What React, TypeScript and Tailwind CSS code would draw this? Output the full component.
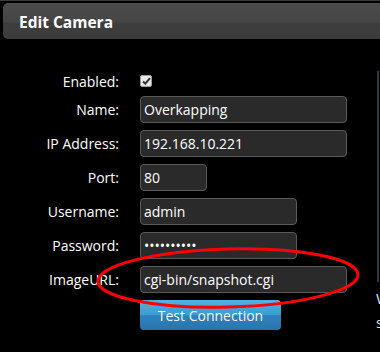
import React from "react";

const rows = [
  { label: "Name:", value: "Overkapping", w: "w-[207px]" },
  { label: "IP Address:", value: "192.168.10.221", w: "w-[207px]" },
  { label: "Port:", value: "80", w: "w-[67px]" },
  { label: "Username:", value: "admin", w: "w-[157px]" },
  { label: "Password:", value: "••••••••••", w: "w-[157px]" },
  { label: "ImageURL:", value: "cgi-bin/snapshot.cgi", w: "w-[207px]" },
];

export default function App() {
  return (
    <div className="relative h-[352px] w-[380px] overflow-hidden bg-black font-['Open_Sans',sans-serif] text-[14px] text-white">
      <div className="h-[3px] border-t border-[#3a3a3a]" />
      <div className="ml-[3px] flex h-[36px] items-center rounded-l-[5px] bg-[linear-gradient(#4b4b4b_0%,#464646_52%,#3d3d3d_56%,#3c3c3c_100%)] pl-[16px] pt-[3px]">
        <span className="text-[15.5px] font-bold">Edit Camera</span>
      </div>

      <div className="flex">
        <div className="flex w-[377px] shrink-0 flex-col pt-[32px]">
          <div className="flex h-[20px] items-center">
            <div className="w-[120px] pr-[1px] text-right">Enabled:</div>
            <div className="ml-[20px] flex h-[12px] w-[12px] items-center justify-center rounded-[2px] border border-[#9a9a9a] bg-[#e8e8e8]">
              <svg width="9" height="8" viewBox="0 0 9 8">
                <path d="M1 4.5 L3.3 6.6 L8 1.2" fill="none" stroke="#333" strokeWidth="2" />
              </svg>
            </div>
          </div>
          <div className="mt-[5px] flex flex-col gap-[7px]">
            {rows.map((r) => (
              <div key={r.label} className="flex h-[27px] items-center">
                <div className="w-[120px] pr-[1px] text-right">{r.label}</div>
                <div
                  className={`ml-[20px] flex h-[27px] items-center rounded-[4px] border border-[#5a5a5a] bg-[#2a2a2a] pl-[3px] ${r.w}`}
                >
                  {r.value}
                </div>
              </div>
            ))}
          </div>
          <div className="ml-[140px] mt-[7px] flex h-[30px] w-[141px] items-center justify-center rounded-[4px] bg-[linear-gradient(#52b3e0_0%,#3c9ad0_50%,#2e82bd_52%,#2a74ad_100%)] text-[14px] text-[#eef6fb]">
            Test Connection
          </div>
        </div>
        <div className="flex shrink-0 flex-col pt-[32px]">
          <div className="h-[211px] w-[3px] border-l-[2px] border-[#2b3b3f]" />
          <div className="ml-[-1px] mt-[2px] text-[15px] leading-[28px] text-[#cfe4f5]">W</div>
          <div className="ml-[-1px] text-[15px] leading-[20px] text-[#cfe4f5]">s</div>
        </div>
      </div>

      <svg className="pointer-events-none absolute left-0 top-0" width="380" height="352">
        <ellipse cx="228" cy="278" rx="130" ry="29" fill="none" stroke="#ff0000" strokeWidth="3" transform="rotate(-1.5 228 278)" />
      </svg>
    </div>
  );
}
